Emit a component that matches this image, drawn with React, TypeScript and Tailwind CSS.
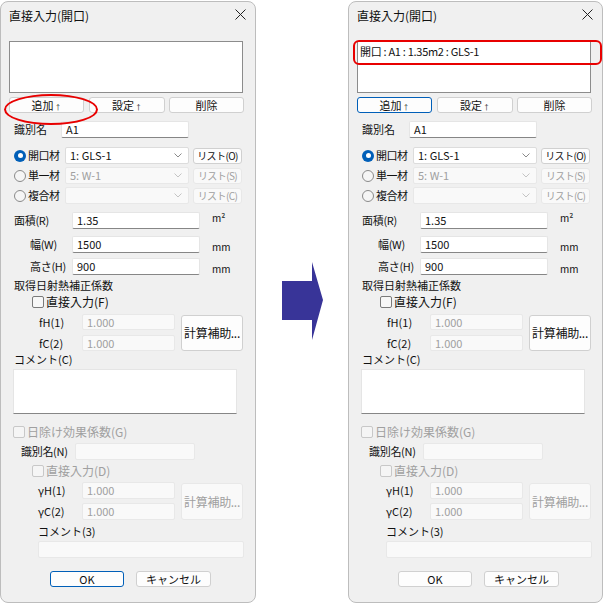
import React from 'react';

const font = { fontFamily: '"Noto Sans CJK JP", "Noto Sans", sans-serif' };

function Field({ w, h = 17, value = '', disabled = false }: { w: number; h?: number; value?: string; disabled?: boolean }) {
  return (
    <div
      className={
        'flex items-center pl-[4px] text-[11px] leading-none rounded-[2px] border shrink-0 ' +
        (disabled
          ? 'bg-[#f9f9f9] border-[#e8e8e8] text-[#a0a0a0]'
          : 'bg-white border-[#e5e5e5] border-b-[#868686] text-[#111]')
      }
      style={{ width: w, height: h }}
    >
      {value}
    </div>
  );
}

function Btn({
  w,
  h = 16,
  children,
  focus = false,
  disabled = false,
}: {
  w: number;
  h?: number;
  children: React.ReactNode;
  focus?: boolean;
  disabled?: boolean;
}) {
  return (
    <div
      className={
        'flex items-center justify-center text-[11px] leading-none rounded-[3px] border shrink-0 whitespace-nowrap ' +
        (disabled
          ? 'bg-[#f9f9f9] border-[#e8e8e8] text-[#a0a0a0]'
          : focus
          ? 'bg-[#fdfdfd] border-[#005fb8] text-[#111]'
          : 'bg-[#fdfdfd] border-[#d0d0d0] text-[#111]')
      }
      style={{ width: w, height: h }}
    >
      {children}
    </div>
  );
}

function Select({ w, value = '', disabled = false }: { w: number; value?: string; disabled?: boolean }) {
  return (
    <div
      className={
        'flex items-center justify-between pl-[4px] pr-[6px] h-[17px] text-[11px] leading-none rounded-[2px] border shrink-0 ' +
        (disabled ? 'bg-[#f9f9f9] border-[#e8e8e8] text-[#a0a0a0]' : 'bg-white border-[#dcdcdc] text-[#111]')
      }
      style={{ width: w }}
    >
      <span>{value}</span>
      <svg width="8" height="5" viewBox="0 0 8 5">
        <path d="M0.5 0.5 L4 4 L7.5 0.5" fill="none" stroke={disabled ? '#c4c4c4' : '#8a8a8a'} strokeWidth="1" />
      </svg>
    </div>
  );
}

function Radio({ checked = false }: { checked?: boolean }) {
  return checked ? (
    <div className="w-[12px] h-[12px] rounded-full bg-[#005fb8] flex items-center justify-center shrink-0">
      <div className="w-[5px] h-[5px] rounded-full bg-white" />
    </div>
  ) : (
    <div className="w-[12px] h-[12px] rounded-full border border-[#8a8a8a] bg-[#f5f5f5] shrink-0" />
  );
}

function Check({ disabled = false }: { disabled?: boolean }) {
  return (
    <div
      className={
        'w-[12px] h-[12px] rounded-[2px] border shrink-0 ' +
        (disabled ? 'border-[#c8c8c8] bg-[#f5f5f5]' : 'border-[#7a7a7a] bg-[#f7f7f7]')
      }
    />
  );
}

function Arrow() {
  return <span className="text-[7px] leading-none ml-[1px] mt-[4px]">↑</span>;
}

function Dialog({ after = false }: { after?: boolean }) {
  return (
    <div
      className="relative mt-px h-[602px] w-full border border-[#bdbdbd] rounded-[8px] bg-[#f0f0f0] text-[11px] leading-none whitespace-nowrap text-[#111] flex flex-col shrink-0"
      style={font}
    >
      {/* title */}
      <div className="h-[27px] flex items-center justify-between pl-[8px] pr-[9px]">
        <span className="text-[12px] leading-none mt-[1px]">直接入力(開口)</span>
        <svg width="11" height="11" viewBox="0 0 11 11" className="mt-[-2px]">
          <path d="M0.5 0.5 L10.5 10.5 M10.5 0.5 L0.5 10.5" stroke="#222" strokeWidth="1" />
        </svg>
      </div>

      {/* list */}
      <div className="ml-[8px] mt-[12px] w-[234px] h-[52px] bg-white border border-[#8c8c8c]">
        {after && <div className="pl-[2px] pt-[4px] text-[11px] leading-none tracking-[-0.3px]">開口 : A1 : 1.35m2 : GLS-1</div>}
      </div>

      <div className="ml-[8px] mt-[4px] flex">
        <Btn w={75} focus={after}>
          追加<Arrow />
        </Btn>
        <div className="ml-[5px]">
          <Btn w={76}>
            設定<Arrow />
          </Btn>
        </div>
        <div className="ml-[4px]">
          <Btn w={75}>削除</Btn>
        </div>
      </div>

      {/* 識別名 */}
      <div className="mt-[8px] h-[17px] flex items-center">
        <span className="ml-[13px] w-[47px]">識別名</span>
        <Field w={128} value="A1" />
      </div>

      {/* radios */}
      {[
        { label: '開口材', value: '1: GLS-1', list: 'リスト(O)', on: true },
        { label: '単一材', value: '5: W-1', list: 'リスト(S)', on: false },
        { label: '複合材', value: '', list: 'リスト(C)', on: false },
      ].map((r, i) => (
        <div key={r.label} className={'flex items-center h-[17px] ' + (i === 0 ? 'mt-[9px]' : 'mt-[3px]')}>
          <div className="ml-[13px]">
            <Radio checked={r.on} />
          </div>
          <span className="ml-[2px] w-[37px] tracking-[-0.5px]">{r.label}</span>
          <Select w={124} value={r.value} disabled={!r.on} />
          <div className="ml-[4px]">
            <Btn w={49} disabled={!r.on}>
              <span className="text-[10px] tracking-[-0.6px]">{r.list}</span>
            </Btn>
          </div>
        </div>
      ))}

      {/* 面積 */}
      {[
        { label: '面積(R)', value: '1.35', unit: 'm²', ml: 13, mt: 'mt-[8px]' },
        { label: '幅(W)', value: '1500', unit: 'mm', ml: 29, mt: 'mt-[7px]' },
        { label: '高さ(H)', value: '900', unit: 'mm', ml: 29, mt: 'mt-[5px]' },
      ].map((r) => (
        <div key={r.label} className={'flex items-center h-[17px] ' + r.mt}>
          <span className="shrink-0 tracking-[-0.3px]" style={{ marginLeft: r.ml, width: 71 - r.ml }}>
            {r.label}
          </span>
          <Field w={128} value={r.value} />
          <span className={'ml-[12px] text-[10px] ' + (r.unit === 'm²' ? 'mt-[-6px]' : 'mt-[4px]')}>{r.unit}</span>
        </div>
      ))}

      <div className="mt-[3px] h-[14px] flex items-center ml-[13px]">取得日射熱補正係数</div>
      <div className="mt-[3px] h-[14px] flex items-center ml-[31px]">
        <Check />
        <span className="ml-[2px] text-[12px]">直接入力(F)</span>
      </div>

      <div className="mt-[5px] flex h-[37px]">
        <div className="flex flex-col">
          <div className="flex items-center">
            <span className="ml-[38px] w-[43px]">fH(1)</span>
            <Field w={93} h={16} value="1.000" disabled />
          </div>
          <div className="flex items-center mt-[5px]">
            <span className="ml-[38px] w-[43px]">fC(2)</span>
            <Field w={93} h={16} value="1.000" disabled />
          </div>
        </div>
        <div className="ml-[6px] mt-[1px]">
          <Btn w={62} h={36}>
            <span className="text-[12px] tracking-[-0.3px]">計算補助...</span>
          </Btn>
        </div>
      </div>

      <div className="mt-[1px] h-[14px] flex items-center ml-[13px]">コメント(C)</div>
      <div className="mt-[3px] ml-[12px] w-[224px] h-[45px] bg-white border border-[#e5e5e5] border-b-[#868686]" />

      <div className="mt-[11px] h-[14px] flex items-center ml-[12px] text-[#a0a0a0]">
        <Check disabled />
        <span className="ml-[2px] text-[12px]">日除け効果係数(G)</span>
      </div>
      <div className="mt-[4px] h-[17px] flex items-center">
        <span className="ml-[20px] w-[54px] tracking-[-0.3px]">識別名(N)</span>
        <Field w={120} disabled />
      </div>
      <div className="mt-[4px] h-[14px] flex items-center ml-[31px] text-[#a0a0a0]">
        <Check disabled />
        <span className="ml-[2px] text-[12px]">直接入力(D)</span>
      </div>

      <div className="mt-[4px] flex h-[38px]">
        <div className="flex flex-col">
          <div className="flex items-center">
            <span className="ml-[37px] w-[44px]">γH(1)</span>
            <Field w={93} value="1.000" disabled />
          </div>
          <div className="flex items-center mt-[4px]">
            <span className="ml-[37px] w-[44px]">γC(2)</span>
            <Field w={93} value="1.000" disabled />
          </div>
        </div>
        <div className="ml-[6px] mt-[1px]">
          <Btn w={62} h={37} disabled>
            <span className="text-[12px] tracking-[-0.3px]">計算補助...</span>
          </Btn>
        </div>
      </div>

      <div className="mt-[4px] h-[14px] flex items-center ml-[37px]">コメント(3)</div>
      <div className="mt-[3px] ml-[37px]">
        <Field w={206} disabled />
      </div>

      <div className="mt-[13px] flex">
        <div className="ml-[49px]">
          <Btn w={74} focus={!after}>
            OK
          </Btn>
        </div>
        <div className="ml-[12px]">
          <Btn w={75}>キャンセル</Btn>
        </div>
      </div>

      {/* annotations */}
      {!after && (
        <div className="absolute left-[3px] top-[92px] w-[94px] h-[31px] rounded-[50%] border-2 border-[#e80000]" />
      )}
      {after && (
        <div className="absolute left-[4px] top-[38px] w-[249px] h-[25px] rounded-[6px] border-2 border-[#e80000]" />
      )}
    </div>
  );
}

export default function App() {
  return (
    <div className="w-[603px] h-[604px] bg-white flex overflow-hidden">
      <div className="w-[256px] shrink-0">
        <Dialog />
      </div>
      <div className="w-[92px] shrink-0 flex items-center justify-center">
        <svg width="41" height="78" viewBox="0 0 41 78" className="mt-[-2px] ml-[1px]">
          <path d="M0 19 H30 V0 L41 38 L30 78 V58 H0 Z" fill="#383498" />
        </svg>
      </div>
      <div className="w-[255px] shrink-0">
        <Dialog after />
      </div>
    </div>
  );
}
